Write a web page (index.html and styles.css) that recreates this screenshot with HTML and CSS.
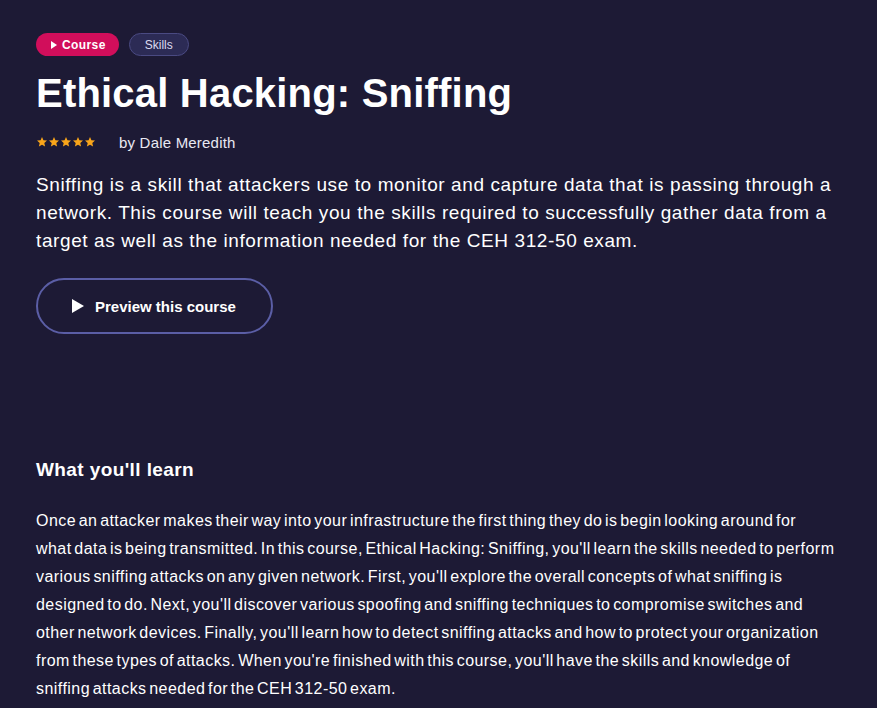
FILE: index.html
```html
<!DOCTYPE html>
<html lang="en">
<head>
  <meta charset="UTF-8" />
  <meta name="viewport" content="width=device-width, initial-scale=1.0"/>
  <title>Ethical Hacking: Sniffing</title>
  <link rel="stylesheet" href="styles.css">
</head>
<body>

  <section class="hero">
    <div class="tags">
      <span class="tag tag-course">
        <svg viewBox="0 0 6 8"><path d="M0 0 L6 4 L0 8 Z"/></svg>
        Course
      </span>
      <span class="tag tag-skills">Skills</span>
    </div>

    <h1>Ethical Hacking: Sniffing</h1>

    <div class="meta">
      <span class="stars">
        <svg viewBox="0 0 24 24"><path d="M12 2l2.9 6.6 7.1.6-5.4 4.7 1.6 7.1L12 17.3 5.8 21l1.6-7.1L2 9.2l7.1-.6z"/></svg>
        <svg viewBox="0 0 24 24"><path d="M12 2l2.9 6.6 7.1.6-5.4 4.7 1.6 7.1L12 17.3 5.8 21l1.6-7.1L2 9.2l7.1-.6z"/></svg>
        <svg viewBox="0 0 24 24"><path d="M12 2l2.9 6.6 7.1.6-5.4 4.7 1.6 7.1L12 17.3 5.8 21l1.6-7.1L2 9.2l7.1-.6z"/></svg>
        <svg viewBox="0 0 24 24"><path d="M12 2l2.9 6.6 7.1.6-5.4 4.7 1.6 7.1L12 17.3 5.8 21l1.6-7.1L2 9.2l7.1-.6z"/></svg>
        <svg viewBox="0 0 24 24"><path d="M12 2l2.9 6.6 7.1.6-5.4 4.7 1.6 7.1L12 17.3 5.8 21l1.6-7.1L2 9.2l7.1-.6z"/></svg>
      </span>
      <span class="author">by Dale Meredith</span>
    </div>

    <p class="summary">Sniffing is a skill that attackers use to monitor and capture data that is passing through a network. This course will teach you the skills required to successfully gather data from a target as well as the information needed for the CEH 312-50 exam.</p>

    <button class="preview">
      <svg viewBox="0 0 12 14"><path d="M0 0 L12 7 L0 14 Z"/></svg>
      Preview this course
    </button>
  </section>

  <section class="learn">
    <h2>What you'll learn</h2>
    <p>Once an attacker makes their way into your infrastructure the first thing they do is begin looking around for what&nbsp;data is being transmitted. In this course, Ethical Hacking: Sniffing, you'll learn the skills needed to perform various sniffing attacks on any given network. First, you'll explore the overall concepts of what sniffing is designed to do. Next, you'll discover various spoofing and sniffing techniques to compromise switches and other network devices. Finally, you'll learn how to detect sniffing attacks and how to protect your organization from these types of attacks. When you're finished with this course, you'll have the skills and knowledge of sniffing attacks needed for the CEH 312-50 exam.</p>
  </section>

</body>
</html>
```

FILE: styles.css
```css
:root {
  --bg: #1d1a35;
  --pink: #d10e5b;
  --skills: #2c2b55;
  --skills-border: #4a4a82;
  --star: #f9a51a;
  --outline: #5b5ea6;
}
* { box-sizing: border-box; }
body {
  margin: 0;
  background: var(--bg);
  color: #fff;
  font-family: "Liberation Sans", Arial, sans-serif;
}

.hero {
  padding: 33px 36px 0;
}

/* Tags */
.tags {
  display: flex;
  gap: 10px;
}
.tag {
  display: inline-flex;
  align-items: center;
  height: 23px;
  border-radius: 12px;
  font-size: 12px;
}
.tag-course {
  background: var(--pink);
  padding: 0 13px 0 15px;
  gap: 5px;
  font-weight: 700;
  letter-spacing: 0.4px;
}
.tag-course svg {
  width: 6px;
  height: 8px;
  fill: #fff;
}
.tag-skills {
  background: var(--skills);
  border: 1px solid var(--skills-border);
  padding: 0 15px;
  color: #dcdcf0;
}

h1 {
  margin: 13px 0 0;
  font-size: 40px;
  line-height: 48px;
  font-weight: 700;
  letter-spacing: 0.2px;
}

/* Rating */
.meta {
  display: flex;
  align-items: center;
  margin-top: 15px;
  height: 20px;
}
.stars {
  display: flex;
  width: 83px;
}
.stars svg {
  width: 12px;
  height: 12px;
  fill: var(--star);
}
.author {
  font-size: 15px;
  letter-spacing: 0.2px;
  color: #e8e8f2;
}

.summary {
  margin: 19px 0 0;
  font-size: 19px;
  line-height: 28px;
  letter-spacing: 0.6px;
}

.preview {
  display: flex;
  align-items: center;
  gap: 11px;
  margin-top: 23px;
  width: 237px;
  height: 56px;
  padding: 0 0 0 34px;
  background: transparent;
  border: 2px solid var(--outline);
  border-radius: 28px;
  color: #fff;
  font-family: inherit;
  font-size: 15px;
  font-weight: 700;
}
.preview svg {
  width: 12px;
  height: 14px;
  fill: #fff;
}

/* What you'll learn */
.learn {
  padding: 123px 36px 0;
}
.learn h2 {
  margin: 0;
  font-size: 19px;
  line-height: 26px;
  font-weight: 700;
  letter-spacing: 0.4px;
}
.learn p {
  margin: 24px 0 0;
  font-size: 16px;
  line-height: 28px;
  letter-spacing: 0.45px;
  word-spacing: -2.2px;
}
```
